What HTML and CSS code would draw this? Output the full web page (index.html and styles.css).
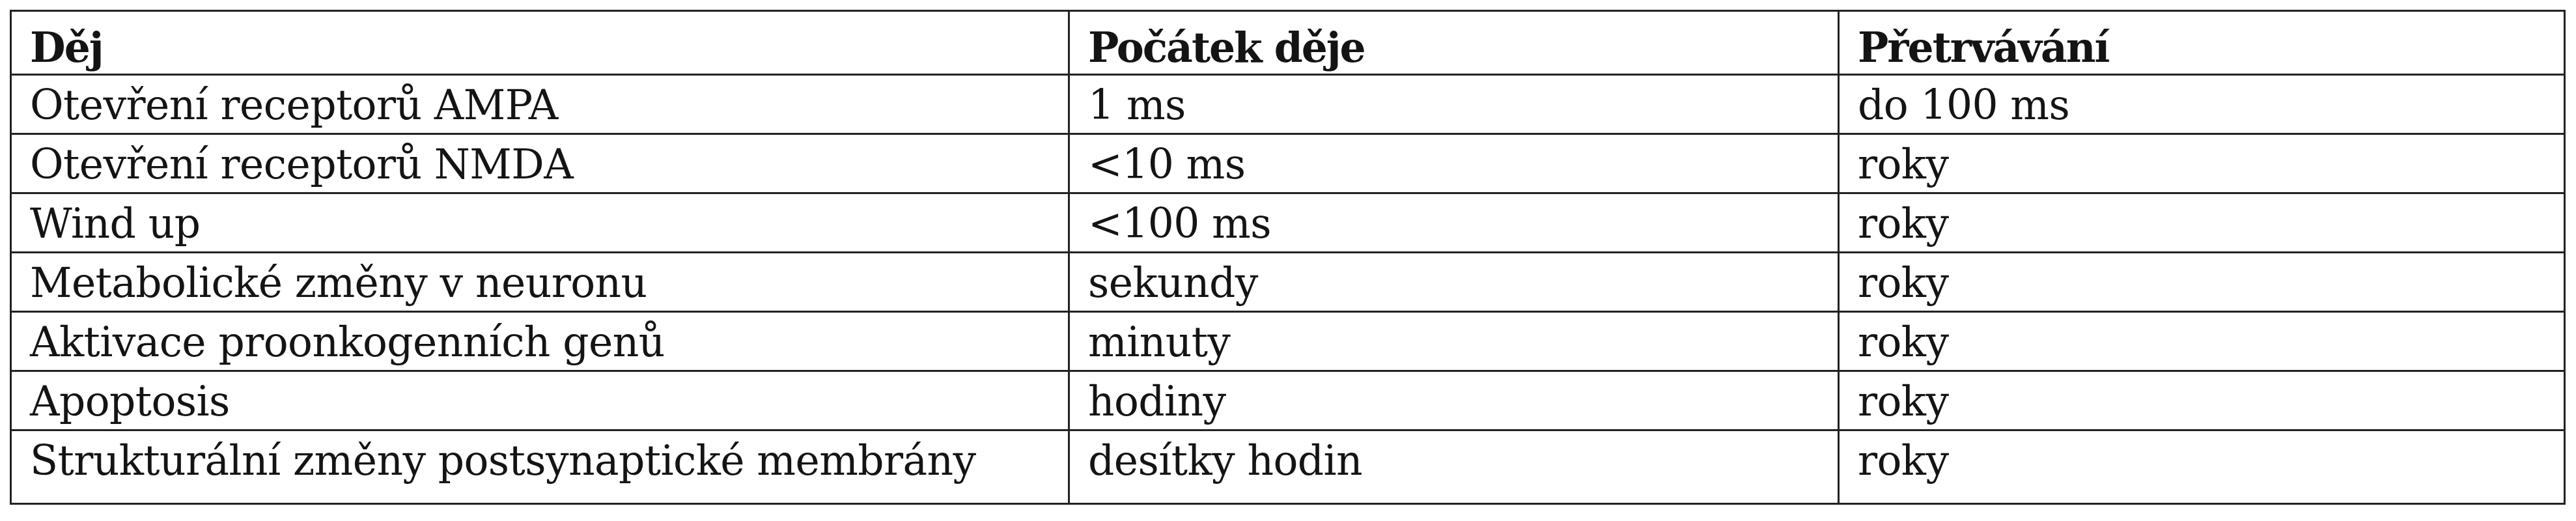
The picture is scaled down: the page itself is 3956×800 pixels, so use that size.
FILE: index.html
```html
<!DOCTYPE html>
<html lang="cs">
<head>
<meta charset="utf-8">
<title>Děj – Počátek děje – Přetrvávání</title>
<link rel="stylesheet" href="styles.css">
</head>
<body>
<div class="page">
  <table class="events">
    <colgroup>
      <col class="c1">
      <col class="c2">
      <col class="c3">
    </colgroup>
    <thead>
      <tr>
        <th>Děj</th>
        <th>Počátek děje</th>
        <th>Přetrvávání</th>
      </tr>
    </thead>
    <tbody>
      <tr><td>Otevření receptorů AMPA</td><td>1 ms</td><td>do 100 ms</td></tr>
      <tr><td>Otevření receptorů NMDA</td><td>&lt;10 ms</td><td>roky</td></tr>
      <tr><td>Wind up</td><td>&lt;100 ms</td><td>roky</td></tr>
      <tr><td>Metabolické změny v neuronu</td><td>sekundy</td><td>roky</td></tr>
      <tr><td>Aktivace proonkogenních genů</td><td>minuty</td><td>roky</td></tr>
      <tr><td>Apoptosis</td><td>hodiny</td><td>roky</td></tr>
      <tr class="last"><td>Strukturální změny postsynaptické membrány</td><td>desítky hodin</td><td>roky</td></tr>
    </tbody>
  </table>
</div>
</body>
</html>
```

FILE: styles.css
```css
html, body {
  margin: 0;
  padding: 0;
  background: #ffffff;
}

.page {
  padding: 15px 0 0 15px;
}

.events {
  border-collapse: collapse;
  table-layout: fixed;
  width: 3922px;
  font-family: "DejaVu Serif", "Liberation Serif", serif;
  font-size: 63px;
  line-height: 75px;
  letter-spacing: -0.6px;
  color: #141414;
}

.c1 { width: 1625px; }
.c2 { width: 1182px; }
.c3 { width: 1115px; }

.events th,
.events td {
  border: 3px solid #222222;
  text-align: left;
  vertical-align: top;
  white-space: nowrap;
  padding: 8px 0 5px 28px;
}

.events th {
  font-weight: bold;
  letter-spacing: -2px;
  padding-top: 18px;
  padding-bottom: 2px;
}

.events tr.last td {
  padding-bottom: 27px;
}
```
